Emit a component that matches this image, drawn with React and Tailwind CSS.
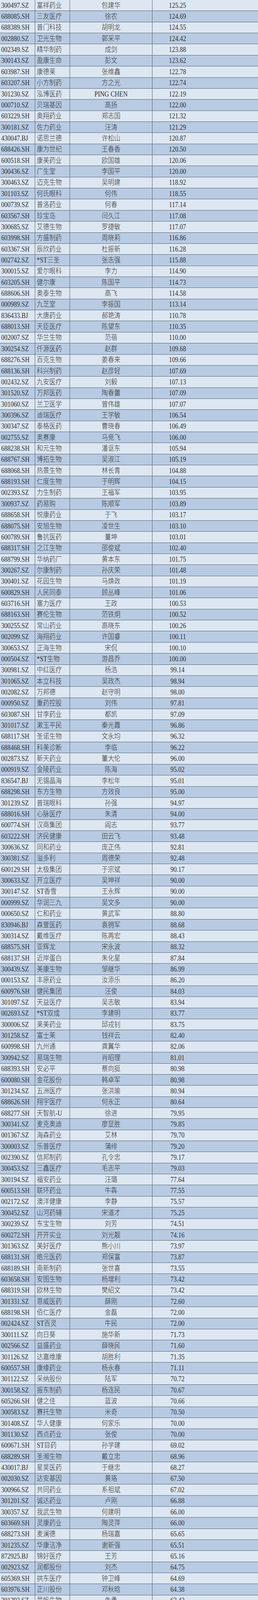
import React from "react";

const RAW = `300497.SZ|富祥药业|包建华|125.25
688085.SH|三友医疗|徐农|124.69
688389.SH|普门科技|胡明龙|124.55
002880.SZ|卫光生物|郭采平|124.42
002349.SZ|精华制药|成剑|123.88
300143.SZ|盈康生命|彭文|123.62
603987.SH|康德莱|张维鑫|122.78
603207.SH|小方制药|方之光|122.74
301230.SZ|泓博医药|PING CHEN|122.19
000710.SZ|贝瑞基因|高扬|122.00
603229.SH|奥翔药业|郑志国|121.32
300181.SZ|佐力药业|汪涛|121.29
430047.BJ|诺思兰德|许松山|120.87
688426.SH|康为世纪|王春香|120.50
600518.SH|康美药业|欧国雄|120.06
300436.SZ|广生堂|李国平|120.00
300463.SZ|迈克生物|吴明建|118.92
301103.SZ|何氏眼科|何伟|118.55
000739.SZ|普洛药业|何春|117.14
603567.SH|珍宝岛|闫久江|117.08
300685.SZ|艾德生物|罗捷敏|117.07
603998.SH|方盛制药|周晓莉|116.86
603367.SH|辰欣药业|杜振新|116.28
002742.SZ|*ST三圣|张志强|115.88
300015.SZ|爱尔眼科|李力|114.90
603205.SH|健尔康|陈国平|114.73
688606.SH|奥泰生物|高飞|114.58
000989.SZ|九芝堂|李振国|113.14
836433.BJ|大唐药业|郝艳涛|110.78
688013.SH|天臣医疗|陈望东|110.35
002007.SZ|华兰生物|范蓓|110.00
300254.SZ|仟源医药|赵群|109.68
688276.SH|百克生物|姜春来|109.66
688136.SH|科兴制药|赵彦轻|107.69
002432.SZ|九安医疗|刘毅|107.13
301520.SZ|万邦医药|陶春蕾|107.09
301060.SZ|兰卫医学|曾伟雄|107.07
300396.SZ|迪瑞医疗|王学敏|106.54
300347.SZ|泰格医药|曹晓春|106.49
002755.SZ|奥赛康|马竞飞|106.00
688238.SH|和元生物|潘讴东|105.94
688767.SH|博拓生物|吴淑江|105.19
688068.SH|热景生物|林长青|104.88
688193.SH|仁度生物|于明辉|104.15
002393.SZ|力生制药|王福军|103.95
300937.SZ|药易购|陈顺军|103.89
688658.SH|悦康药业|于飞|103.17
688075.SH|安旭生物|凌世生|103.10
600789.SH|鲁抗医药|董坤|103.01
688317.SH|之江生物|邵俊斌|102.40
688799.SH|华纳药厂|黄本东|101.75
300267.SZ|尔康制药|孙庆荣|101.48
300401.SZ|花园生物|马焕政|101.19
600829.SH|人民同泰|顾丛峰|101.06
603716.SH|塞力医疗|王政|100.53
688163.SH|赛伦生物|范铁炯|100.52
300255.SZ|常山药业|高晓东|100.26
002099.SZ|海翔药业|许国睿|100.11
300653.SZ|正海生物|宋侃|100.10
000504.SZ|*ST生物|游昌乔|100.00
300981.SZ|中红医疗|杨浩|99.14
301065.SZ|本立科技|吴政杰|98.94
002082.SZ|万邦德|赵守明|98.00
000950.SZ|重药控股|刘伟|97.81
603087.SH|甘李药业|都凯|97.09
301017.SZ|漱玉平民|秦光霞|96.86
688117.SH|圣诺生物|文永均|96.32
688468.SH|科美诊断|李临|96.22
002873.SZ|新天药业|董大伦|96.00
000919.SZ|金陵药业|陈海|95.02
836547.BJ|无锡晶海|李松年|95.01
688298.SH|东方生物|方效良|95.00
301239.SZ|普瑞眼科|孙强|94.97
688016.SH|心脉医疗|朱清|94.00
600774.SH|汉商集团|阎志|93.77
603222.SH|济民健康|田云飞|93.48
300636.SZ|同和药业|庞正伟|92.81
300381.SZ|溢多利|周德荣|92.48
600129.SH|太极集团|于宗斌|90.17
300633.SZ|开立医疗|吴坤祥|90.00
300147.SZ|ST香雪|王永辉|90.00
000999.SZ|华润三九|吴文多|90.00
000650.SZ|仁和药业|黄武军|88.80
830946.BJ|森萱医药|袁拥军|88.68
300314.SZ|戴维医疗|陈再宏|88.43
688575.SH|亚辉龙|宋永波|88.32
688137.SH|近岸蛋白|朱化星|87.84
300439.SZ|美康生物|邹继华|86.99
000153.SZ|丰原药业|汝添乐|86.20
600976.SH|健民集团|汪俊|84.03
301097.SZ|天益医疗|吴志敏|83.94
002693.SZ|*ST双成|李建明|83.77
300006.SZ|莱美药业|邱戎钊|83.75
301258.SZ|富士莱|钱祥云|82.40
600998.SH|九州通|龚翼华|82.06
300942.SZ|易瑞生物|肖昭理|81.01
688393.SH|安必平|蔡向挺|80.98
600080.SH|金花股份|韩卓军|80.98
301234.SZ|五洲医疗|张洪瑜|80.94
688626.SH|翔宇医疗|何永正|80.64
688277.SH|天智航-U|徐进|79.95
300341.SZ|麦克奥迪|廖显胜|79.85
001367.SZ|海森药业|艾林|79.70
300003.SZ|乐普医疗|蒲绯|79.20
002390.SZ|信邦制药|孔令忠|79.17
300453.SZ|三鑫医疗|毛志平|79.03
300194.SZ|福安药业|汪璐|77.64
600513.SH|联环药业|牛犇|77.55
002172.SZ|澳洋健康|李静|75.57
300452.SZ|山河药辅|宋道才|75.25
300239.SZ|东宝生物|刘芳|74.51
600272.SH|开开实业|刘光靓|74.16
301363.SZ|美好医疗|熊小川|73.97
688131.SH|皓元医药|郑保富|73.87
688189.SH|南新制药|张世喜|73.55
603658.SH|安图生物|杨增利|73.42
688319.SH|欧林生物|樊绍文|73.42
301331.SZ|恩威医药|薛刚|72.60
688198.SH|佰仁医疗|金磊|72.00
002424.SZ|ST百灵|牛民|72.00
300111.SZ|向日葵|施华新|71.73
002566.SZ|益盛药业|薛晓民|71.60
301126.SZ|达嘉维康|胡胜利|71.35
600557.SH|康缘药业|杨永春|71.11
301122.SZ|采纳股份|陆军|70.72
300158.SZ|振东制药|杨连民|70.67
605266.SH|健之佳|蓝波|70.66
300583.SZ|赛托生物|米奇|70.50
301408.SZ|华人健康|何家乐|70.00
301130.SZ|西点药业|张俊|70.00
600671.SH|ST目药|孙学建|69.02
688289.SH|圣湘生物|戴立忠|68.96
430017.BJ|星昊医药|于继忠|68.27
002030.SZ|达安基因|黄珞|67.50
300966.SZ|共同药业|系祖斌|67.02
301201.SZ|诚达药业|卢刚|66.88
300357.SZ|我武生物|何建明|66.00
603669.SH|灵康药业|陶灵萍|66.00
688273.SH|麦澜德|杨瑞嘉|65.65
301235.SZ|华康洁净|谢新强|65.51
872925.BJ|锦好医疗|王芳|65.16
002923.SZ|润都股份|刘杰|64.75
605369.SH|拱东医疗|钟卫峰|64.69
603976.SH|正川股份|邓秋晗|64.38
301393.SZ|昊帆生物|朱勇|63.42`;

const ROWS = RAW.split("\n").map((l) => l.split("|"));

function Row({ cells, index }) {
  const [code, name, person, value] = cells;
  const bg = index % 2 === 0 ? "bg-[#dde7f2]" : "bg-[#b8cbe3]";
  return (
    <div
      className={`grid grid-cols-[90px_89px_211px_270px] h-[28.366px] border-b border-[#55606c] ${bg}`}
    >
      <div className="flex items-center border-r border-[#55606c] pl-[3px]">
        <span className="inline-block scale-y-[1.2] whitespace-nowrap">{code}</span>
      </div>
      <div className="flex items-center border-r border-[#55606c] pl-[4px]">
        <span className="inline-block scale-y-[1.15] whitespace-nowrap">{name}</span>
      </div>
      <div className="flex items-center justify-center border-r border-[#55606c]">
        <span className="inline-block scale-y-[1.15] whitespace-nowrap">{person}</span>
      </div>
      <div className="flex items-center">
        <span className="inline-block w-[128px] text-center scale-y-[1.2] whitespace-nowrap">{value}</span>
      </div>
    </div>
  );
}

export default function App() {
  return (
    <div
      className="w-[660px] bg-[#dde7f2] text-[#2e2e2e] text-[16px] leading-none font-light"
      style={{ fontFamily: "'Liberation Serif', 'Noto Sans CJK SC', serif" }}
    >
      {ROWS.map((r, i) => (
        <Row key={i} cells={r} index={i} />
      ))}
    </div>
  );
}
